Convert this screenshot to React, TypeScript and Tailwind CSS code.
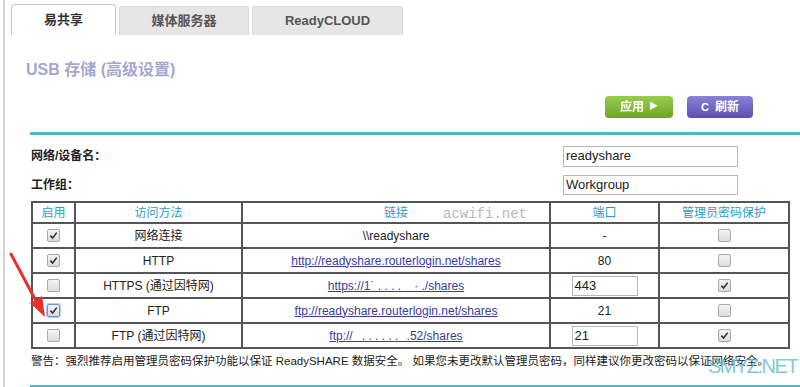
import React from "react";

const font = { fontFamily: '"Liberation Sans", Arial, "Noto Sans CJK SC", sans-serif' };

function Box({ checked, focus }: { checked?: boolean; focus?: boolean }) {
  return (
    <span
      className={
        "inline-flex h-[13px] w-[13px] items-center justify-center rounded-[2px] border bg-gradient-to-b from-[#f4f4f4] to-[#dcdcdc] " +
        (focus ? "border-[#6d8fd6] ring-1 ring-[#b9cdf3]" : "border-[#a9a9a9]")
      }
    >
      {checked && (
        <svg width="9" height="9" viewBox="0 0 10 10">
          <path d="M1.5 5.2 L4 7.8 L8.6 1.8" fill="none" stroke="#333" strokeWidth="1.8" />
        </svg>
      )}
    </span>
  );
}

const rows = [
  { on: true, method: "网络连接", link: "\\\\readyshare", isLink: false, port: "-", portInput: false, pw: false },
  { on: true, method: "HTTP", link: "http://readyshare.routerlogin.net/shares", isLink: true, port: "80", portInput: false, pw: false },
  { on: false, method: "HTTPS (通过因特网)", link: "https://1\u02D9 .  .  .  .\u2009\u2009\u2009\u2009 \u00B7 ./shares", isLink: true, port: "443", portInput: true, pw: true },
  { on: true, focus: true, method: "FTP", link: "ftp://readyshare.routerlogin.net/shares", isLink: true, port: "21", portInput: false, pw: false },
  { on: false, method: "FTP (通过因特网)", link: "ftp:// \u00A0\u2009.  .  .  .  .  .\u2009\u2009 .52/shares", isLink: true, port: "21", portInput: true, pw: true },
];

export default function App() {
  return (
    <div className="relative h-[387px] w-[800px] overflow-hidden bg-white text-[12px] text-[#222]" style={font}>
      <div className="ml-[3px] h-full border-l-2 border-[#d4d4d4] pl-[6px]">
        {/* tabs */}
        <div className="flex h-[35px] items-end gap-[3px] pt-[4px]">
          <div className="flex h-[31px] w-[105px] items-center justify-center rounded-t-[4px] border border-b-0 border-[#c8c8c8] bg-white text-[13px] font-bold text-[#333]">
            易共享
          </div>
          <div className="flex h-[29px] w-[130px] items-center justify-center rounded-t-[3px] border border-b-0 border-[#d8d8d8] bg-[#e6e6e6] text-[13px] font-bold text-[#555]">
            媒体服务器
          </div>
          <div className="flex h-[29px] w-[151px] items-center justify-center rounded-t-[3px] border border-b-0 border-[#d8d8d8] bg-[#e6e6e6] text-[13px] font-bold text-[#555]">
            ReadyCLOUD
          </div>
        </div>

        <div className="pl-[15px] pt-[25px] text-[16px] font-bold leading-[20px] text-[#a6a6d2]">USB 存储 (高级设置)</div>

        {/* buttons */}
        <div className="mt-[16px] flex justify-end gap-[14px] pr-[47px]">
          <div className="flex h-[22px] w-[68px] items-center justify-center gap-[5px] rounded-[4px] bg-gradient-to-b from-[#9ccc4c] to-[#6ca42a] text-[12px] font-bold text-white">
            应用 <span className="text-[9px]">▶</span>
          </div>
          <div className="flex h-[22px] w-[66px] items-center justify-center gap-[6px] rounded-[4px] bg-gradient-to-b from-[#8a82d6] to-[#5b4fb0] text-[12px] font-bold text-white">
            <span className="text-[11px]">C</span> 刷新
          </div>
        </div>

        <div className="ml-[19px] mt-[14px] h-[3px] bg-[#4fb6c6]" />

        <div className="ml-[20px] mr-[3px]">
          <div className="mt-[10px] flex h-[22px] items-center">
            <div className="w-[532px] font-bold text-[12px]">网络/设备名：</div>
            <div className="flex h-[21px] w-[175px] items-center border border-[#b8b8b8] px-[2px] text-[13px]">readyshare</div>
          </div>
          <div className="mt-[7px] flex h-[21px] items-center">
            <div className="w-[532px] font-bold text-[12px]">工作组：</div>
            <div className="flex h-[20px] w-[175px] items-center border border-[#b8b8b8] px-[2px] text-[13px]">Workgroup</div>
          </div>

          <table className="mt-[6px] w-[759px] table-fixed border-collapse border-2 border-[#555] text-center text-[12px]">
            <colgroup>
              <col className="w-[43px]" />
              <col className="w-[167px]" />
              <col className="w-[308px]" />
              <col className="w-[109px]" />
              <col />
            </colgroup>
            <thead>
              <tr className="h-[21px] text-[#2d9dc4]">
                <th className="border-2 border-[#555] font-normal">启用</th>
                <th className="border-2 border-[#555] font-normal">访问方法</th>
                <th className="relative border-2 border-[#555] font-normal">
                  链接
                  <span className="absolute left-[200px] top-[1px] text-[14px] text-[#b8b8b8]" style={{ fontFamily: '"Liberation Mono", "DejaVu Sans Mono", monospace' }}>
                    acwifi.net
                  </span>
                </th>
                <th className="border-2 border-[#555] font-normal">端口</th>
                <th className="border-2 border-[#555] font-normal">管理员密码保护</th>
              </tr>
            </thead>
            <tbody>
              {rows.map((r, i) => (
                <tr key={i} className="h-[25px]">
                  <td className="border-2 border-[#555] align-middle">
                    <div className="flex items-center justify-center">
                      <Box checked={r.on} focus={(r as any).focus} />
                    </div>
                  </td>
                  <td className="border-2 border-[#555]">{r.method}</td>
                  <td className="border-2 border-[#555]">
                    {r.isLink ? (
                      <span className="text-[#3a3aa0] underline">{r.link}</span>
                    ) : (
                      <span>{r.link}</span>
                    )}
                  </td>
                  <td className="border-2 border-[#555]">
                    {r.portInput ? (
                      <div className="flex justify-center">
                        <div className="flex h-[20px] w-[66px] items-center border border-[#b8b8b8] px-[2px] text-left text-[13px]">{r.port}</div>
                      </div>
                    ) : (
                      r.port
                    )}
                  </td>
                  <td className="border-2 border-[#555]">
                    <div className="flex items-center justify-center">
                      <Box checked={r.pw} />
                    </div>
                  </td>
                </tr>
              ))}
            </tbody>
          </table>

          <div className="mt-[4px] whitespace-nowrap text-[11.5px] leading-[16px]">
            警告：强烈推荐启用管理员密码保护功能以保证 ReadySHARE 数据安全。 如果您未更改默认管理员密码，同样建议你更改密码以保证网络安全。
          </div>
        </div>

        <div className="ml-[19px] mt-[16px] h-[3px] bg-[#4fb6c6]" />
      </div>

      {/* watermark */}
      <div className="absolute left-[708px] top-[354px] text-[20px] leading-[24px] tracking-[-1.5px] text-[#64bccb] opacity-80" style={{ fontFamily: '"Liberation Sans", sans-serif' }}>
        SMYZ.NET
      </div>

      {/* red arrow */}
      <svg className="absolute left-0 top-0" width="60" height="330" viewBox="0 0 60 330">
        <path d="M11 254 L36 301" stroke="#e8302c" strokeWidth="3" strokeLinecap="round" />
        <path d="M30 303 L45 317 L42 296 Z" fill="#e8302c" />
      </svg>
    </div>
  );
}
